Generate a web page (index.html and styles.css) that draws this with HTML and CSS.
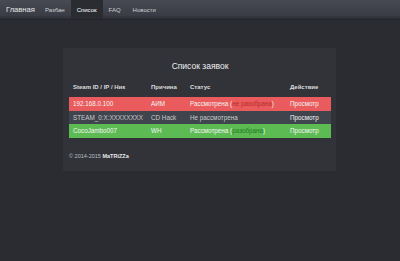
FILE: index.html
```html
<!DOCTYPE html>
<html lang="ru">
<head>
<meta charset="utf-8">
<link rel="stylesheet" href="styles.css">
</head>
<body>
<nav class="navbar">
  <a class="brand">Главная</a>
  <a class="nav-link">Разбан</a>
  <a class="nav-link active">Список</a>
  <a class="nav-link">FAQ</a>
  <a class="nav-link">Новости</a>
</nav>
<main class="wrap">
  <section class="panel">
    <h1 class="title">Список заявок</h1>
    <table class="list">
      <thead>
        <tr><th>Steam ID / IP / Ник</th><th>Причина</th><th>Статус</th><th>Действие</th></tr>
      </thead>
      <tbody>
        <tr class="row-red"><td>192.168.0.100</td><td>АИМ</td><td>Рассмотрена (<span class="st-red">не разобрана</span>)</td><td>Просмотр</td></tr>
        <tr class="row-gray"><td>STEAM_0:X:XXXXXXXX</td><td>CD Hack</td><td>Не рассмотрена</td><td>Просмотр</td></tr>
        <tr class="row-green"><td>CocoJambo007</td><td>WH</td><td>Рассмотрена (<span class="st-green">разобрана</span>)</td><td>Просмотр</td></tr>
      </tbody>
    </table>
    <p class="footer">© 2014-2015 <b>MaTRiZZa</b></p>
  </section>
</main>
</body>
</html>
```
FILE: styles.css
```css
html, body { margin: 0; padding: 0; }
body {
  background: #2a2c31;
  font-family: "Liberation Sans", Arial, sans-serif;
  color: #e6e6e6;
  width: 400px;
  height: 261px;
  overflow: hidden;
}
.navbar {
  height: 19px;
  display: flex;
  align-items: stretch;
  background: linear-gradient(#474a52, #3a3d45 80%, #2c2e34);
  border-bottom: 1px solid #23252a;
}
.navbar a {
  display: flex;
  align-items: center;
  color: #cfd0d3;
  font-size: 6px;
}
.brand {
  font-size: 7.6px !important;
  color: #e8e8e8 !important;
  padding: 0 4px 0 6px;
}
.nav-link { padding: 0 6px; }
.nav-link.active {
  background: #2a2c31;
  color: #ffffff !important;
}
.wrap {
  display: flex;
  justify-content: center;
  padding-top: 28px;
}
.panel {
  width: 273px;
  height: 123px;
  background: #313339;
  box-sizing: border-box;
  padding: 13px 5px 0 6px;
  margin-left: -1px;
}
.title {
  margin: 0;
  font-size: 8.5px;
  font-weight: normal;
  text-align: center;
  color: #f0f0f0;
  line-height: 10px;
}
.list {
  width: 262px;
  margin-top: 10px;
  border-collapse: collapse;
  font-size: 6.3px;
}
.list th {
  text-align: left;
  font-weight: bold;
  font-size: 6px;
  color: #dcdcdc;
  padding: 0 0 4px 4px;
  height: 12px;
}
.list td {
  padding: 0 0 0 4px;
  height: 13.5px;
  color: #f4f4f4;
}
.list th:nth-child(1), .list td:nth-child(1) { width: 74px; }
.list th:nth-child(2), .list td:nth-child(2) { width: 35px; }
.list th:nth-child(3), .list td:nth-child(3) { width: 96px; }
.row-red { background: #e95b5c; }
.row-gray { background: #40444c; }
.row-gray td { color: #c9cacc; }
.row-gray td:last-child { color: #f4f4f4; }
.row-green { background: #5dbb53; }
.st-red { color: #b82b2b; }
.st-green { color: #237a23; }
.footer {
  margin: 15px 0 0 0;
  font-size: 5.5px;
  color: #bfc0c3;
}
.footer b { color: #e8e8e8; }
```
